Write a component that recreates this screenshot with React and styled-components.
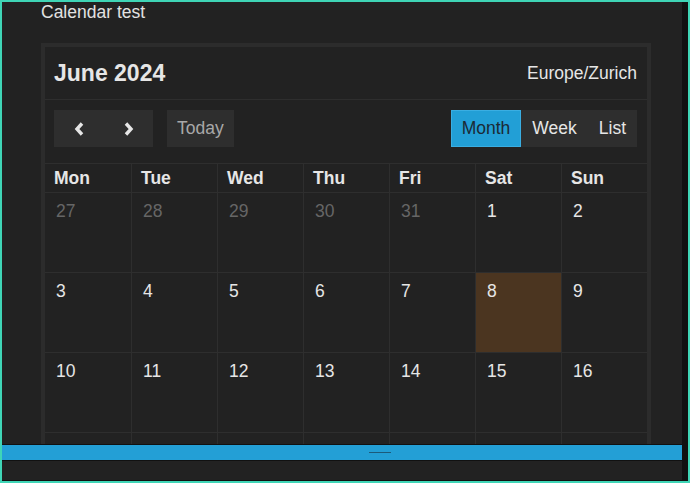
import React from "react";
import styled, { createGlobalStyle } from "styled-components";

const GlobalStyle = createGlobalStyle`
  html, body {
    margin: 0;
    padding: 0;
    background: #222;
  }
  body {
    font-family: "Liberation Sans", Arial, sans-serif;
  }
`;

const Frame = styled.div`
  width: 690px;
  height: 483px;
  box-sizing: border-box;
  border: 2px solid #3fd5b6;
  display: flex;
  flex-direction: row;
  overflow: hidden;
  background: #222;
`;

const MainColumn = styled.div`
  flex: 1;
  display: flex;
  flex-direction: column;
  min-width: 0;
`;

const ScrollTrack = styled.div`
  width: 6px;
  background: #111;
`;

const Content = styled.div`
  flex: 1;
  overflow: hidden;
  padding: 0 31px 0 39px;
  background: #222;
`;

const PageTitle = styled.div`
  font-size: 17.5px;
  line-height: 20px;
  color: #e2e2e2;
`;

const Card = styled.div`
  margin-top: 21px;
  border: 4px solid #2c2c2c;
  border-bottom: none;
  background: #222;
`;

const Header = styled.div`
  height: 52px;
  display: flex;
  align-items: center;
  justify-content: space-between;
  padding: 0 10px 0 9px;
  border-bottom: 1px solid #2e2e2e;
`;

const MonthTitle = styled.h2`
  margin: 0;
  font-size: 23px;
  font-weight: 700;
  color: #e6e6e6;
`;

const Zone = styled.span`
  font-size: 17.5px;
  color: #e6e6e6;
`;

const Toolbar = styled.div`
  height: 63px;
  box-sizing: border-box;
  display: flex;
  align-items: flex-start;
  padding: 10px 10px 0 9px;
`;

const Group = styled.div`
  display: flex;
  margin-left: ${(p) => (p.$gap ? "14px" : "0")};
`;

const Spacer = styled.div`
  flex: 1;
`;

const Button = styled.button`
  height: 37px;
  box-sizing: border-box;
  border: 1px solid ${(p) => (p.$active ? "#3aaee2" : "#2e2e2e")};
  background: ${(p) => (p.$active ? "#229fd6" : "#2e2e2e")};
  color: ${(p) => (p.$active ? "#1b2a35" : p.$muted ? "#a8a8a8" : "#e6e6e6")};
  font-family: "Liberation Sans", Arial, sans-serif;
  font-size: 17.5px;
  padding: 0 ${(p) => p.$pad || 10}px;
  width: ${(p) => (p.$w ? `${p.$w}px` : "auto")};
  display: flex;
  align-items: center;
  justify-content: center;
  cursor: pointer;
`;

const Grid = styled.div`
  display: grid;
  grid-template-columns: repeat(7, 1fr);
  border-top: 1px solid #2e2e2e;
`;

const DayName = styled.div`
  height: 28px;
  line-height: 28px;
  padding-left: 9px;
  font-size: 17.5px;
  font-weight: 700;
  color: #e6e6e6;
  border-bottom: 1px solid #2e2e2e;
  border-left: ${(p) => (p.$first ? "none" : "1px solid #2e2e2e")};
`;

const Cell = styled.div`
  height: 80px;
  padding: 8px 0 0 11px;
  box-sizing: border-box;
  font-size: 17.5px;
  line-height: 20px;
  color: ${(p) => (p.$other ? "#666" : "#e6e6e6")};
  background: ${(p) => (p.$today ? "#4b3520" : "transparent")};
  border-bottom: 1px solid #2e2e2e;
  border-left: ${(p) => (p.$first ? "none" : "1px solid #2e2e2e")};
`;

const Splitter = styled.div`
  height: 15px;
  background: #239fd6;
  border-top: 1px solid #111;
  border-bottom: 1px solid #111;
  display: flex;
  align-items: center;
  padding-left: 367px;
`;

const Handle = styled.div`
  width: 22px;
  height: 1px;
  background: #1c5a7a;
`;

const BottomPanel = styled.div`
  height: 19px;
  background: #222;
  border-bottom: 1px solid #111;
`;

const Chevron = ({ dir }) => (
  <svg width="10" height="14" viewBox="0 0 10 14">
    <polyline
      points={dir === "left" ? "8,1.5 3,7 8,12.5" : "2,1.5 7,7 2,12.5"}
      fill="none"
      stroke="#e6e6e6"
      strokeWidth="3.4"
    />
  </svg>
);

const days = ["Mon", "Tue", "Wed", "Thu", "Fri", "Sat", "Sun"];

const weeks = [];
{
  let cur = [];
  [27, 28, 29, 30, 31].forEach((d) => cur.push({ d, other: true }));
  for (let d = 1; d <= 30; d++) {
    cur.push({ d, today: d === 8 });
    if (cur.length === 7) {
      weeks.push(cur);
      cur = [];
    }
  }
}

export default function App() {
  return (
    <>
      <GlobalStyle />
      <Frame>
        <MainColumn>
          <Content>
            <PageTitle>Calendar test</PageTitle>
            <Card>
              <Header>
                <MonthTitle>June 2024</MonthTitle>
                <Zone>Europe/Zurich</Zone>
              </Header>
              <Toolbar>
                <Group>
                  <Button $w={50}>
                    <Chevron dir="left" />
                  </Button>
                  <Button $w={49}>
                    <Chevron dir="right" />
                  </Button>
                </Group>
                <Group $gap>
                  <Button $muted $pad={9}>Today</Button>
                </Group>
                <Spacer />
                <Group>
                  <Button $active $pad={10}>Month</Button>
                  <Button $pad={10}>Week</Button>
                  <Button $pad={10}>List</Button>
                </Group>
              </Toolbar>
              <Grid>
                {days.map((n, i) => (
                  <DayName key={n} $first={i === 0}>
                    {n}
                  </DayName>
                ))}
                {weeks.flat().map((c, i) => (
                  <Cell
                    key={i}
                    $first={i % 7 === 0}
                    $other={c.other}
                    $today={c.today}
                  >
                    {c.d}
                  </Cell>
                ))}
              </Grid>
            </Card>
          </Content>
          <Splitter>
            <Handle />
          </Splitter>
          <BottomPanel />
        </MainColumn>
        <ScrollTrack />
      </Frame>
    </>
  );
}
